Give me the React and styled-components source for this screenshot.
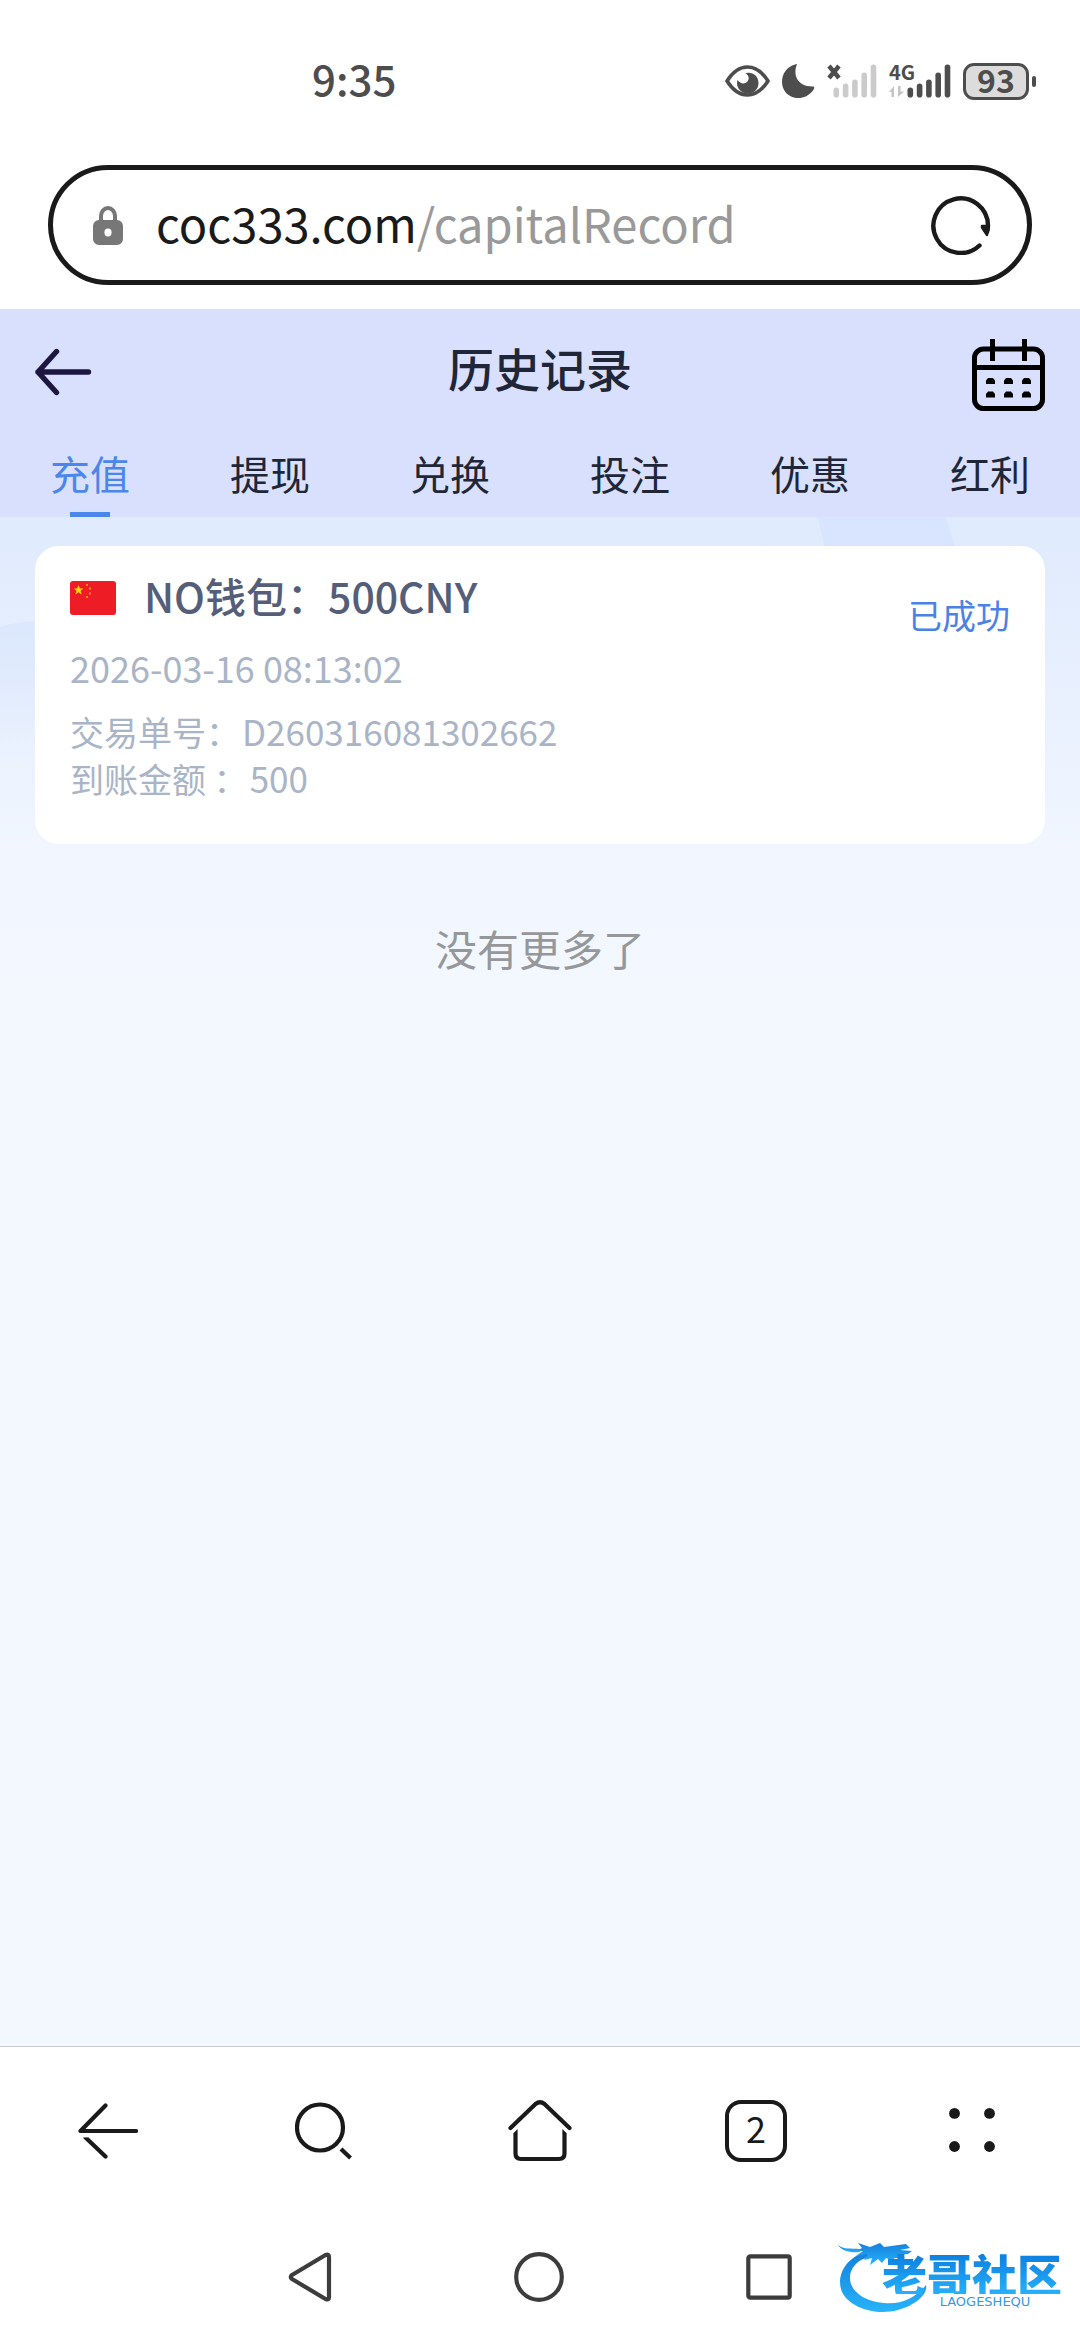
import React, { useState } from "react";
import styled, { createGlobalStyle } from "styled-components";

const GlobalStyle = createGlobalStyle`
  * {
    box-sizing: border-box;
  }

  body {
    margin: 0;
    background-color: #fff;
    font-family: "Noto Sans CJK SC", "Noto Sans", sans-serif;
  }

  button {
    margin: 0;
    padding: 0;
    border: none;
    background: none;
    font: inherit;
    color: inherit;
    cursor: pointer;
  }

  svg {
    display: block;
    flex-shrink: 0;
  }
`;

const Screen = styled.div`
  display: flex;
  flex-direction: column;
  min-height: 100vh;
`;

// status bar
const StatusBar = styled.div`
  display: flex;
  align-items: center;
  justify-content: space-between;
  height: 162px;
  padding: 0 44px 0 312px;
  color: #4d4d4d;
`;

const Clock = styled.time`
  padding-bottom: 6px;
  font-size: 42px;
  line-height: 60px;
  font-weight: 500;
`;

const StatusIcons = styled.div`
  display: flex;
  align-items: center;
  gap: 12px;
`;

const Network = styled.div`
  display: flex;
  align-items: flex-end;
`;

const NetworkType = styled.div`
  display: flex;
  flex-direction: column;
  align-items: flex-start;
  gap: 6px;
  width: 18px;
  height: 34px;
  font-size: 20px;
  line-height: 16px;
  font-weight: 700;
`;

const Battery = styled.div`
  display: flex;
  align-items: center;
  gap: 3px;

  &::after {
    content: "";
    width: 4px;
    height: 11px;
    border-radius: 2px;
    background-color: #4d4d4d;
  }
`;

const BatteryLevel = styled.span`
  width: 66px;
  height: 37px;
  border: 3px solid #4d4d4d;
  border-radius: 11px;
  background-color: #dcdcdc;
  font-size: 32px;
  line-height: 26px;
  font-weight: 700;
  text-align: center;
`;

// address bar
const AddressRow = styled.div`
  padding: 3px 48px 24px;
`;

const AddressBar = styled.div`
  display: flex;
  align-items: center;
  height: 120px;
  padding: 0 36px 0 40px;
  border: 5px solid #1a1a1a;
  border-radius: 60px;
`;

const Address = styled.button`
  flex: 1;
  padding: 0 0 4px 33px;
  font-size: 47px;
  line-height: 64px;
  text-align: left;
  color: #1a1a1a;

  span {
    color: #999;
  }
`;

// page header
const PageHeader = styled.header`
  background-color: #d8e0fe;
`;

const TitleBar = styled.div`
  display: grid;
  grid-template-columns: 1fr auto 1fr;
  align-items: center;
  height: 126px;
  padding: 0 35px;
`;

const Title = styled.h1`
  margin: 0;
  padding-bottom: 10px;
  font-size: 46px;
  line-height: 60px;
  font-weight: 500;
  color: #1e2637;
`;

const CalendarButton = styled.button`
  justify-self: end;
  padding-top: 6px;
`;

const Tabs = styled.nav`
  display: grid;
  grid-template-columns: repeat(6, 1fr);
  height: 82px;
`;

const Tab = styled.button`
  display: flex;
  flex-direction: column;
  align-items: center;
  justify-content: space-between;
  padding-top: 8px;
  font-size: 40px;
  line-height: 60px;
  color: ${(props) => (props.$active ? "#4b87ea" : "#1e2637")};

  &::after {
    content: "";
    width: 40px;
    height: 5px;
    background-color: ${(props) => (props.$active ? "#4b87ea" : "transparent")};
  }
`;

// records
const Content = styled.main`
  position: relative;
  flex: 1;
  padding: 29px 35px;
  background: linear-gradient(#dfeafd, #f1f6ff 340px, #f3f8ff 460px);
`;

const Backdrop = styled.svg`
  position: absolute;
  top: 0;
  left: 0;
  width: 100%;
  height: 360px;
`;

const Card = styled.article`
  position: relative;
  display: flex;
  justify-content: space-between;
  min-height: 298px;
  padding: 22px 35px 40px;
  border-radius: 24px;
  background-color: #fff;
`;

const Wallet = styled.h2`
  display: flex;
  align-items: center;
  gap: 28px;
  height: 60px;
  margin: 0 0 16px;
  font-size: 41px;
  font-weight: 500;
  color: #555e78;

  span {
    padding-bottom: 6px;
    line-height: 54px;
  }
`;

const Detail = styled.p`
  margin: 0;
  font-size: 34px;
  line-height: 46px;
  color: #a9b4c6;

  span {
    margin-left: 2px;
    font-size: 35px;
  }
`;

const RecordTime = styled(Detail)`
  margin-bottom: 18px;
  font-size: 36px;
`;

const State = styled.span`
  padding-top: 24px;
  font-size: 34px;
  line-height: 46px;
  color: #4b82e3;
`;

const NoMore = styled.p`
  position: relative;
  margin: 74px 0 0;
  font-size: 42px;
  line-height: 60px;
  text-align: center;
  color: #969799;
`;

// browser toolbar
const Toolbar = styled.nav`
  display: grid;
  grid-template-columns: repeat(5, 1fr);
  height: 168px;
  border-top: 1px solid #c8c9cf;
`;

const ToolButton = styled.button`
  display: flex;
  align-items: center;
  justify-content: center;
  color: #1a1a1a;
`;

const TabCount = styled.span`
  width: 62px;
  height: 62px;
  border: 4px solid #1a1a1a;
  border-radius: 16px;
  font-size: 36px;
  line-height: 46px;
  text-align: center;
`;

const SystemBar = styled.div`
  position: relative;
  display: flex;
  align-items: center;
  justify-content: center;
  gap: 182px;
  height: 126px;
  color: #3c3c3c;
`;

const Brand = styled.div`
  position: absolute;
  right: 18px;
  bottom: 26px;
  display: flex;
`;

const BrandText = styled.div`
  display: flex;
  flex-direction: column;
  align-items: center;
  gap: 1px;
  margin-left: -50px;
  padding-top: 16px;
`;

const BrandName = styled.strong`
  font-size: 45px;
  line-height: 40px;
  font-weight: 900;
  color: transparent;
  background: linear-gradient(#0d7fe0, #27b0fa);
  background-clip: text;
`;

const BrandLatin = styled.span`
  padding-left: 26px;
  font-family: "DejaVu Sans", sans-serif;
  font-size: 13px;
  line-height: 13px;
  color: #2f9be8;
`;

const BARS = [10, 14, 18, 25, 33];

const Signal = ({ color }) => (
  <svg width="44" height="34" viewBox="0 0 44 34" fill={color}>
    {BARS.map((h, i) => (
      <rect key={h} x={i * 9.3 + 0.5} y={33.5 - h} width="5.6" height={h} rx="2.8" />
    ))}
  </svg>
);

const EyeIcon = () => (
  <svg width="45" height="32" viewBox="0 0 45 32">
    <path
      d="M2 16C8 6.500 15 2 22.500 2S37 6.500 43 16C37 25.500 30 30 22.500 30S8 25.500 2 16Z"
      fill="none"
      stroke="#4d4d4d"
      strokeWidth="3.600"
      strokeLinejoin="round"
    />
    <path
      d="M22 8C28 7 33.500 11.500 33.500 18C33.500 24 29 28.500 23 28.500S12 24 12 18C12 17 12.200 16 12.600 15C15 19 20 19.500 22.500 16.500C24.500 14 24 10.500 20.500 8.300Z"
      fill="#4d4d4d"
    />
  </svg>
);

const MoonIcon = () => (
  <svg width="33" height="34" viewBox="0 0 33 34" fill="#4d4d4d">
    <path d="M15 0.500C11 9 14 23 31.500 22.500C33 23 32 25 31 26.500C27 31.500 22 34 16 34C7 34 0 27 0 18C0 9.500 5 2.500 13 0.400C14 0.200 15.300 0 15 0.500Z" />
  </svg>
);

const NoSignalBars = styled.div`
  margin-left: -8px;
`;

const NoSignalIcon = () => (
  <Network>
    <svg width="14" height="34" viewBox="0 0 14 34">
      <path d="M2 2L12 14M12 2L2 14" stroke="#4d4d4d" strokeWidth="4.400" />
    </svg>
    <NoSignalBars>
      <Signal color="#cbcbcb" />
    </NoSignalBars>
  </Network>
);

const LockIcon = () => (
  <svg width="30" height="39" viewBox="0 0 30 39">
    <path d="M8 16V10A7 8 0 0 1 22 10V16" fill="none" stroke="#777" strokeWidth="4" />
    <path
      fill="#777"
      fillRule="evenodd"
      d="M6 14H24A6 6 0 0 1 30 20V33A6 6 0 0 1 24 39H6A6 6 0 0 1 0 33V20A6 6 0 0 1 6 14ZM15 22.500A3.600 4 0 1 0 15 30.500A3.600 4 0 1 0 15 22.500Z"
    />
  </svg>
);

const ReloadIcon = () => (
  <svg width="60" height="60" viewBox="0 0 60 60">
    <path
      d="M48.500 50.500A27.300 27.300 0 1 1 57 30.500C57 33 56.800 35 56 37"
      fill="none"
      stroke="#1a1a1a"
      strokeWidth="4.400"
      strokeLinecap="round"
    />
    <path d="M51 31L57 31L56 40L51 32.500Z" fill="#1a1a1a" stroke="#1a1a1a" strokeWidth="2.400" strokeLinejoin="round" />
  </svg>
);

const BackIcon = () => (
  <svg width="57" height="48" viewBox="0 0 57 48">
    <path
      d="M53.500 24H3M21.500 3.500L3 24L21.500 44.500"
      fill="none"
      stroke="#1d1740"
      strokeWidth="5.400"
      strokeLinecap="round"
      strokeLinejoin="round"
    />
  </svg>
);

const CalendarIcon = () => (
  <svg width="73" height="73" viewBox="0 0 73 73">
    <g fill="none" stroke="#000" strokeWidth="5">
      <rect x="2.500" y="10" width="68" height="59.500" rx="9" />
      <path d="M20.500 0V22M52.500 0V22M2 28.500H71" />
    </g>
    {[42, 55.5].map((y) =>
      [18.5, 36.5, 54.5].map((x) => (
        <path key={`${x}-${y}`} d={`M${x - 4.5} ${y + 3}v-3.500l2 -2.500h5l2 2.500v3.500z`} />
      ))
    )}
  </svg>
);

const STARS = [
  [17, 4],
  [20, 7.5],
  [20, 12.5],
  [17, 16],
];

const ChinaFlag = () => (
  <svg width="46" height="34" viewBox="0 0 46 34">
    <rect width="46" height="34" rx="3" fill="#ee1c25" />
    <path d="M8.500 4L9.800 7.500H13.200L10.500 9.800L11.600 13.500L8.500 11.300L5.400 13.500L6.500 9.800L3.800 7.500H7.200Z" fill="#ffde00" />
    {STARS.map(([x, y]) => (
      <circle key={y} cx={x} cy={y} r="1" fill="#ffb400" />
    ))}
  </svg>
);

const lineProps = {
  fill: "none",
  stroke: "currentColor",
  strokeWidth: 4.2,
  strokeLinecap: "round",
  strokeLinejoin: "round",
};

const TOOLS = [
  {
    name: "后退",
    icon: (
      <svg width="60" height="56" viewBox="0 0 60 56" {...lineProps}>
        <path d="M27.500 2.500L2.500 28H58" />
        <path d="M7.500 34.500L27.500 53.500" />
        <path d="M4 33.200H10" stroke="#fff" strokeWidth="2.400" strokeLinecap="butt" />
      </svg>
    ),
  },
  {
    name: "搜索",
    icon: (
      <svg width="58" height="58" viewBox="0 0 58 58" {...lineProps}>
        <circle cx="25" cy="25.500" r="23" />
        <path d="M46 47L55.500 56" strokeLinecap="butt" />
      </svg>
    ),
  },
  {
    name: "主页",
    icon: (
      <svg width="64" height="62" viewBox="0 0 64 62" {...lineProps}>
        <path d="M2.500 28L27.500 4Q32 0.500 36.500 4L61.500 28" />
        <path d="M7.500 33V53.500Q7.500 59 13 59H51Q56.500 59 56.500 53.500V33" strokeLinecap="butt" />
        <path d="M5.400 33.200L9.600 29V33.200ZM58.600 33.200L54.400 29V33.200Z" fill="currentColor" stroke="none" />
      </svg>
    ),
  },
  { name: "标签页", icon: <TabCount>2</TabCount> },
  {
    name: "菜单",
    icon: (
      <svg width="46" height="46" viewBox="0 0 46 46" fill="currentColor">
        <circle cx="5.500" cy="5.400" r="5.400" />
        <circle cx="40.500" cy="5.400" r="5.400" />
        <circle cx="5.500" cy="38.500" r="5.400" />
        <circle cx="40.500" cy="38.500" r="5.400" />
      </svg>
    ),
  },
];

const DragonIcon = () => (
  <svg width="96" height="76" viewBox="0 0 96 76">
    <defs>
      <linearGradient id="dragon" x1="0" y1="0" x2="0" y2="1">
        <stop offset="0" stopColor="#1480dc" />
        <stop offset="1" stopColor="#27b3fb" />
      </linearGradient>
    </defs>
    <g fill="url(#dragon)">
      <path d="M30 14C8 20 0 40 6 54C14 70 40 78 62 72C80 67 92 56 90 47C80 60 64 67 48 65C26 63 14 52 14 40C14 30 22 20 36 19Z" />
      <path d="M22 5L34 9L44 5L48 9L70 6L74 10L64 12L76 13L72 16L62 17L70 20L58 20L60 24L50 20L46 25L42 21L34 27L36 20L28 22L32 16L20 18L27 13L20 13L26 10Z" />
      <path d="M2 7C8 12 14 10 24 11L24 14C14 15 6 13 2 7Z" />
    </g>
  </svg>
);

const TABS = ["充值", "提现", "兑换", "投注", "优惠", "红利"];

const App = () => {
  const [tab, setTab] = useState(TABS[0]);

  return (
    <Screen>
      <GlobalStyle />
      <StatusBar>
        <Clock>9:35</Clock>
        <StatusIcons>
          <EyeIcon />
          <MoonIcon />
          <NoSignalIcon />
          <Network>
            <NetworkType>
              4G
              <svg width="15" height="12" viewBox="0 0 15 12" fill="#c4c4c4">
                <path d="M5 0V11H2.500V6H0ZM9 0V11L15 5.500H11.500V0Z" />
              </svg>
            </NetworkType>
            <Signal color="#4d4d4d" />
          </Network>
          <Battery>
            <BatteryLevel>93</BatteryLevel>
          </Battery>
        </StatusIcons>
      </StatusBar>

      <AddressRow>
        <AddressBar>
          <LockIcon />
          <Address>
            coc333.com<span>/capitalRecord</span>
          </Address>
          <button aria-label="刷新">
            <ReloadIcon />
          </button>
        </AddressBar>
      </AddressRow>

      <PageHeader>
        <TitleBar>
          <button aria-label="返回">
            <BackIcon />
          </button>
          <Title>历史记录</Title>
          <CalendarButton aria-label="选择日期">
            <CalendarIcon />
          </CalendarButton>
        </TitleBar>
        <Tabs>
          {TABS.map((name) => (
            <Tab key={name} $active={name === tab} onClick={() => setTab(name)}>
              {name}
            </Tab>
          ))}
        </Tabs>
      </PageHeader>

      <Content>
        <Backdrop viewBox="0 0 1080 360" preserveAspectRatio="none">
          <defs>
            <linearGradient id="wave" x1="0" y1="0" x2="0" y2="1">
              <stop offset="0" stopColor="#dbe7fc" />
              <stop offset="1" stopColor="#dbe7fc" stopOpacity="0" />
            </linearGradient>
          </defs>
          <path d="M818 0H946Q950 14 956 32H825Z" fill="#d9e4fe" />
          <path d="M0 110Q16 104 60 103V240H0Z" fill="url(#wave)" />
        </Backdrop>
        <Card>
          <div>
            <Wallet>
              <ChinaFlag />
              <span>NO钱包：500CNY</span>
            </Wallet>
            <RecordTime>2026-03-16 08:13:02</RecordTime>
            <Detail>
              交易单号：<span>D260316081302662</span>
            </Detail>
            <Detail>
              到账金额 ：<span>500</span>
            </Detail>
          </div>
          <State>已成功</State>
        </Card>
        <NoMore>没有更多了</NoMore>
      </Content>

      <Toolbar>
        {TOOLS.map(({ name, icon }) => (
          <ToolButton key={name} aria-label={name}>
            {icon}
          </ToolButton>
        ))}
      </Toolbar>

      <SystemBar>
        <button aria-label="系统返回">
          <svg width="44" height="50" viewBox="0 0 44 50" {...lineProps}>
            <path d="M37.500 3Q41 1.500 41 5V45Q41 48.500 37.500 47L4 27Q1.500 25 4 23Z" />
          </svg>
        </button>
        <button aria-label="系统主页">
          <svg width="50" height="50" viewBox="0 0 50 50" {...lineProps}>
            <circle cx="25" cy="25" r="22.800" />
          </svg>
        </button>
        <button aria-label="最近任务">
          <svg width="46" height="46" viewBox="0 0 46 46" {...lineProps}>
            <rect x="2.300" y="2.300" width="41.400" height="41.400" rx="2" />
          </svg>
        </button>
        <Brand>
          <DragonIcon />
          <BrandText>
            <BrandName>老哥社区</BrandName>
            <BrandLatin>LAOGESHEQU</BrandLatin>
          </BrandText>
        </Brand>
      </SystemBar>
    </Screen>
  );
};

export default App;
